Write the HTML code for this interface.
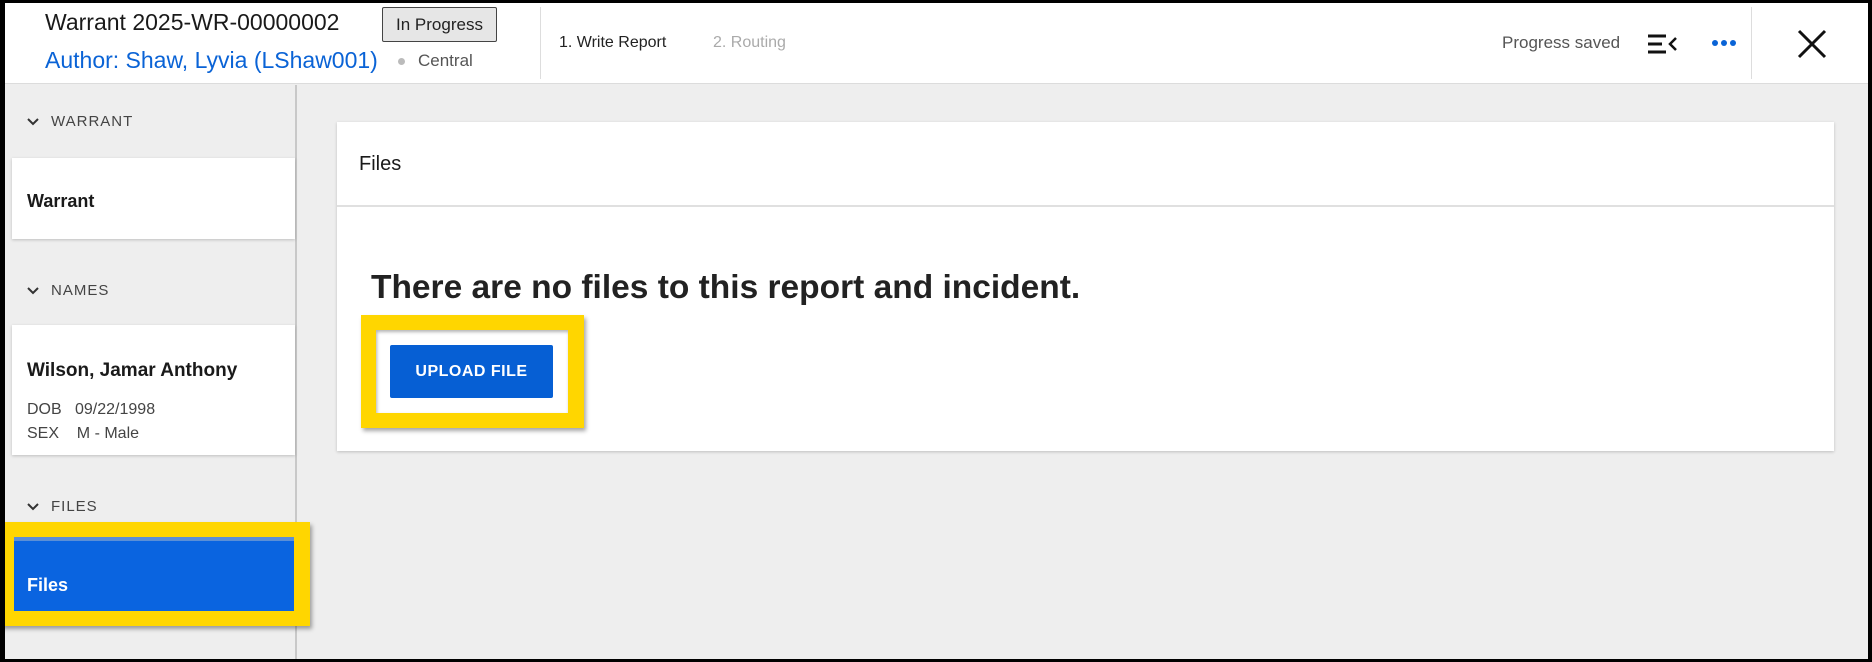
<!DOCTYPE html>
<html><head><meta charset="utf-8"><style>
*{box-sizing:border-box;margin:0;padding:0}
body{width:1872px;height:662px;overflow:hidden;background:#000;font-family:"Liberation Sans",Arial,sans-serif;position:relative}
.frame{position:absolute;left:5px;top:3px;right:4px;bottom:3px;background:#eeeeee;overflow:hidden}
.abs{position:absolute}
.hdr{position:absolute;left:0;top:0;right:0;height:81px;background:#fff;border-bottom:1px solid #dcdcdc}
.t{white-space:nowrap}
.sec{font-size:15px;color:#444;letter-spacing:1px}
.sec svg{position:absolute;left:-24px;top:4px}
</style></head><body>
<div class="frame">
 <div class="hdr">
  <div class="abs t" style="left:40px;top:6px;font-size:23px;color:#1a1a1a">Warrant 2025-WR-00000002</div>
  <div class="abs t" style="left:377px;top:4px;width:115px;height:35px;border:1px solid #444;border-radius:2px;background:#e6e6e6;font-size:17px;color:#222;line-height:33px;text-align:center">In Progress</div>
  <div class="abs t" style="left:40px;top:44px;font-size:23px;color:#0a63d6">Author: Shaw, Lyvia (LShaw001)</div>
  <div class="abs" style="left:393px;top:55px;width:7px;height:7px;border-radius:50%;background:#bbb"></div>
  <div class="abs t" style="left:413px;top:48px;font-size:17px;color:#555">Central</div>
  <div class="abs" style="left:535px;top:4px;width:1px;height:72px;background:#ddd"></div>
  <div class="abs t" style="left:554px;top:31px;font-size:16px;color:#222">1. Write Report</div>
  <div class="abs t" style="left:708px;top:31px;font-size:16px;color:#aaa">2. Routing</div>
  <div class="abs t" style="left:1497px;top:30px;font-size:17px;color:#555">Progress saved</div>
  <svg class="abs" style="left:1643px;top:30px" width="30" height="22" viewBox="0 0 30 22"><path d="M0 3h18M0 11h14M0 19h18" stroke="#111" stroke-width="3"/><path d="M28 5l-6 6 6 6" stroke="#111" stroke-width="2.5" fill="none"/></svg>
  <svg class="abs" style="left:1706px;top:36px" width="26" height="8"><circle cx="4" cy="4" r="3" fill="#0a63d6"/><circle cx="13" cy="4" r="3" fill="#0a63d6"/><circle cx="22" cy="4" r="3" fill="#0a63d6"/></svg>
  <div class="abs" style="left:1746px;top:4px;width:1px;height:72px;background:#ddd"></div>
  <svg class="abs" style="left:1792px;top:26px" width="30" height="30"><path d="M2 2L28 28M28 2L2 28" stroke="#111" stroke-width="3"/></svg>
 </div>
 <!-- sidebar -->
 <div class="abs" style="left:0;top:82px;width:292px;bottom:0;background:#eeeeee;border-right:2px solid #c8c8c8"></div>
 <div class="abs t sec" style="left:46px;top:110px"><svg width="12" height="10"><path d="M1 2l5 5 5-5" stroke="#333" stroke-width="2" fill="none"/></svg>WARRANT</div>
 <div class="abs" style="left:7px;top:155px;width:283px;height:81px;background:#fff;box-shadow:0 1px 3px rgba(0,0,0,.2)"></div>
 <div class="abs t" style="left:22px;top:188px;font-size:18px;font-weight:bold;color:#1a1a1a">Warrant</div>
 <div class="abs t sec" style="left:46px;top:279px"><svg width="12" height="10"><path d="M1 2l5 5 5-5" stroke="#333" stroke-width="2" fill="none"/></svg>NAMES</div>
 <div class="abs" style="left:7px;top:322px;width:283px;height:130px;background:#fff;box-shadow:0 1px 3px rgba(0,0,0,.2)"></div>
 <div class="abs t" style="left:22px;top:357px;font-size:19px;font-weight:bold;color:#1a1a1a">Wilson, Jamar Anthony</div>
 <div class="abs t" style="left:22px;top:398px;font-size:16px;color:#444">DOB&nbsp;&nbsp;&nbsp;09/22/1998</div>
 <div class="abs t" style="left:22px;top:422px;font-size:16px;color:#444">SEX&nbsp;&nbsp;&nbsp;&nbsp;M - Male</div>
 <div class="abs t sec" style="left:46px;top:495px"><svg width="12" height="10"><path d="M1 2l5 5 5-5" stroke="#333" stroke-width="2" fill="none"/></svg>FILES</div>
 <div class="abs" style="left:-5px;top:519px;width:310px;height:104px;background:#ffd600;box-shadow:2px 3px 4px rgba(0,0,0,.35)"></div>
 <div class="abs" style="left:9px;top:534px;width:280px;height:74px;background:#0a64e0;border-top:4px solid #5b8fd6"></div>
 <div class="abs t" style="left:22px;top:572px;font-size:18px;font-weight:bold;color:#fff">Files</div>
 <!-- content card -->
 <div class="abs" style="left:332px;top:119px;width:1497px;height:329px;background:#fff;box-shadow:0 1px 3px rgba(0,0,0,.2)"></div>
 <div class="abs t" style="left:354px;top:150px;font-size:20px;color:#1a1a1a">Files</div>
 <div class="abs" style="left:332px;top:202px;width:1497px;height:2px;background:#e0e0e0"></div>
 <div class="abs t" style="left:366px;top:266px;font-size:33.5px;font-weight:bold;color:#222">There are no files to this report and incident.</div>
 <div class="abs" style="left:356px;top:312px;width:223px;height:113px;background:#ffd600;box-shadow:2px 3px 4px rgba(0,0,0,.35)"></div>
 <div class="abs" style="left:371px;top:327px;width:192px;height:83px;background:#fff;box-shadow:inset 1px 2px 3px rgba(0,0,0,.3)"></div>
 <div class="abs t" style="left:385px;top:342px;width:163px;height:53px;background:#065fd4;border-radius:2px;color:#fff;font-size:16px;font-weight:bold;text-align:center;line-height:53px;letter-spacing:.5px">UPLOAD FILE</div>
</div>
</body></html>
